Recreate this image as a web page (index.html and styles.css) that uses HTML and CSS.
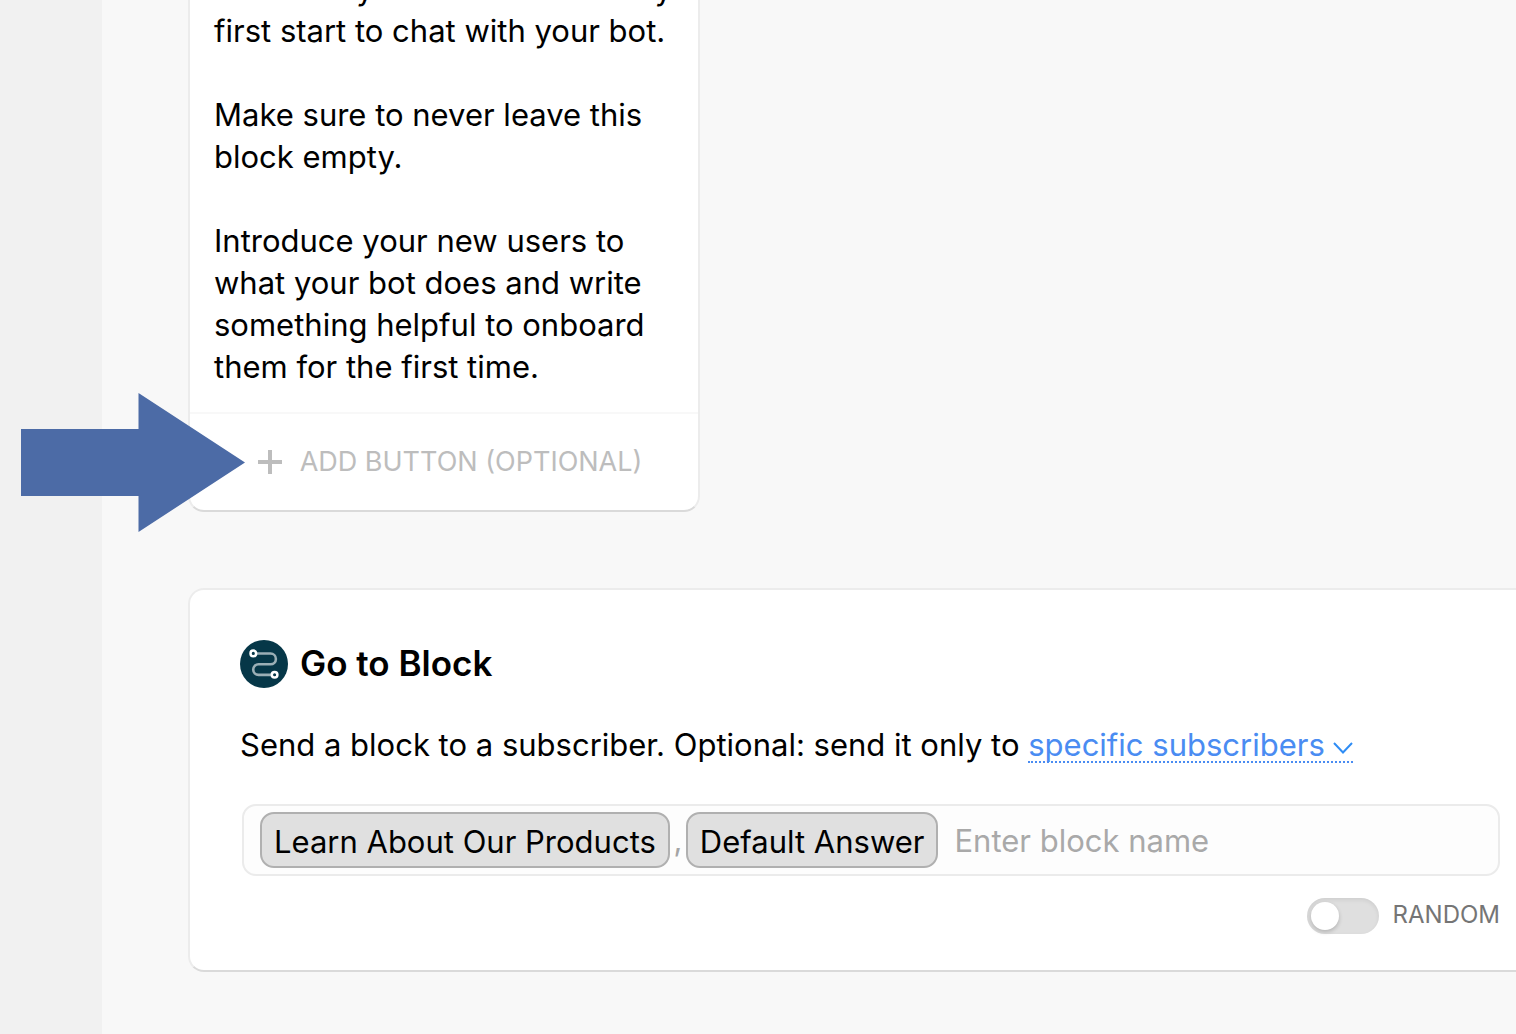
FILE: index.html
```html
<!DOCTYPE html>
<html lang="en">
<head>
    <meta charset="UTF-8">
    <meta name="viewport" content="width=device-width, initial-scale=1.0">
    <title>Welcome Message</title>
    <link rel="stylesheet" href="styles.css">
</head>
<body>
    <!-- Sidebar -->
    <aside class="sidebar"></aside>

    <!-- Main Content -->
    <main class="content">
        <section class="card text-card">
            <div class="message">
                <p>shown to your users when they<br>first start to chat with your bot.</p>
                <p>Make sure to never leave this<br>block empty.</p>
                <p>Introduce your new users to<br>what your bot does and write<br>something helpful to onboard<br>them for the first time.</p>
            </div>
            <button type="button" class="add-button">
                <svg width="24" height="24" viewBox="0 0 24 24" aria-hidden="true">
                    <path d="M12 0v24M0 12h24" stroke="#bdbdbd" stroke-width="4"/>
                </svg>
                <span>ADD BUTTON (OPTIONAL)</span>
            </button>
            <svg class="arrow" width="224" height="139" viewBox="0 0 224 139" aria-hidden="true">
                <path d="M0 36H117.500V0L224 69.500L117.500 139V103H0z" fill="#4c6ba6"/>
            </svg>
        </section>

        <section class="card goto-card">
            <header class="card-header">
                <svg width="48" height="48" viewBox="0 0 48 48" aria-hidden="true">
                    <circle cx="24" cy="24" r="24" fill="#063748"/>
                    <path d="M14 13.500H30.500a5.400 5.400 0 0 1 0 10.800H18.500a5.300 5.300 0 0 0 0 10.600H34" fill="none" stroke="#9bafb6" stroke-width="2.600"/>
                    <circle cx="13.300" cy="13.400" r="2.800" fill="#063748" stroke="#fff" stroke-width="2.500"/>
                    <circle cx="34.600" cy="34.700" r="2.800" fill="#063748" stroke="#fff" stroke-width="2.500"/>
                </svg>
                <h2>Go to Block</h2>
            </header>

            <p class="description">
                Send a block to a subscriber. Optional: send it only to
                <a href="#" class="filter-link">specific subscribers<svg width="20" height="14" viewBox="0 0 20 14" aria-hidden="true"><path d="M1 1l9 9.500L19 1" fill="none" stroke="#2f8df5" stroke-width="2"/></svg></a>
            </p>

            <div class="block-field">
                <button type="button" class="tag">Learn About Our Products</button>
                <span class="comma">,</span>
                <button type="button" class="tag">Default Answer</button>
                <input type="text" placeholder="Enter block name" aria-label="Block name">
            </div>

            <label class="random">
                <input type="checkbox" class="switch">
                <span>RANDOM</span>
            </label>
        </section>
    </main>
</body>
</html>
```
FILE: styles.css
```css
/* General Styles */
* {
    box-sizing: border-box;
}

body {
    display: flex;
    min-height: 100vh;
    margin: 0;
    background-color: #f8f8f8;
    color: #000;
    font-family: Inter, "Liberation Sans", sans-serif;
    font-size: 31px;
    line-height: 42px;
    overflow: hidden;
}

button,
input {
    font: inherit;
}

h2,
p {
    margin: 0;
}

.sidebar {
    flex: 0 0 102px;
    background-color: #f1f1f1;
}

.content {
    flex: 1;
    min-width: 0;
    padding-left: 86px;
}

.card {
    background-color: #fff;
    border: 2px solid #ececec;
    border-bottom-color: #dadada;
    border-radius: 16px;
}

/* Text card */
.text-card {
    position: relative;
    width: 512px;
    margin-top: -34px;
}

.message {
    padding: 0 24px 24px;
    border-bottom: 2px solid #f8f8f8;
    white-space: nowrap;
}

.message p + p {
    margin-top: 42px;
}

.add-button {
    display: flex;
    align-items: center;
    justify-content: center;
    gap: 18px;
    width: 100%;
    height: 96px;
    padding: 0 12px 0 24px;
    border: none;
    background: none;
    color: #bdbdbd;
    font-size: 27px;
    white-space: nowrap;
    cursor: pointer;
}

.arrow {
    position: absolute;
    left: -169px;
    bottom: -22px;
}

/* Go to Block card */
.goto-card {
    margin: 76px -36px 0 0;
    padding: 50px 50px 36px;
}

.card-header {
    display: flex;
    align-items: center;
    gap: 12px;
}

.card-header h2 {
    padding-bottom: 2px;
    font-size: 35px;
    font-weight: 600;
}

.description {
    margin-top: 36px;
    white-space: nowrap;
}

.filter-link {
    display: inline-block;
    border-bottom: 2px dotted #4a8cf2;
    color: #4a8cf2;
    line-height: 32px;
    text-decoration: none;
}

.filter-link svg {
    margin-left: 8px;
}

.block-field {
    display: flex;
    align-items: center;
    height: 72px;
    margin: 38px 0 0 2px;
    padding: 0 16px;
    border: 2px solid #ebebeb;
    border-radius: 14px;
    background-color: #fdfdfd;
}

.tag {
    height: 56px;
    padding: 4px 12px 0;
    border: 2px solid #b0b0b0;
    border-radius: 14px;
    background-color: #e0e0e0;
    color: #000;
    white-space: nowrap;
}

.comma {
    width: 16px;
    color: #a5a5a5;
    text-align: center;
}

.block-field input {
    flex: 1;
    min-width: 0;
    padding: 2px 16px 0;
    border: none;
    outline: none;
    background: none;
}

.block-field input::placeholder {
    color: #a9a9a9;
}

.random {
    display: flex;
    align-items: center;
    justify-content: flex-end;
    gap: 14px;
    margin-top: 22px;
    color: #757575;
    font-size: 24px;
    line-height: 32px;
}

.random span {
    padding-bottom: 2px;
}

.switch {
    appearance: none;
    width: 72px;
    height: 36px;
    margin: 0;
    padding: 4px;
    border-radius: 18px;
    background-color: #dfdfdf;
    box-shadow: inset 0 2px 4px rgba(0, 0, 0, 0.08);
}

.switch::before {
    content: "";
    display: block;
    width: 28px;
    height: 28px;
    border-radius: 50%;
    background-color: #fff;
    box-shadow: 0 2px 4px rgba(0, 0, 0, 0.2);
}

.switch:checked::before {
    margin-left: auto;
}
```
